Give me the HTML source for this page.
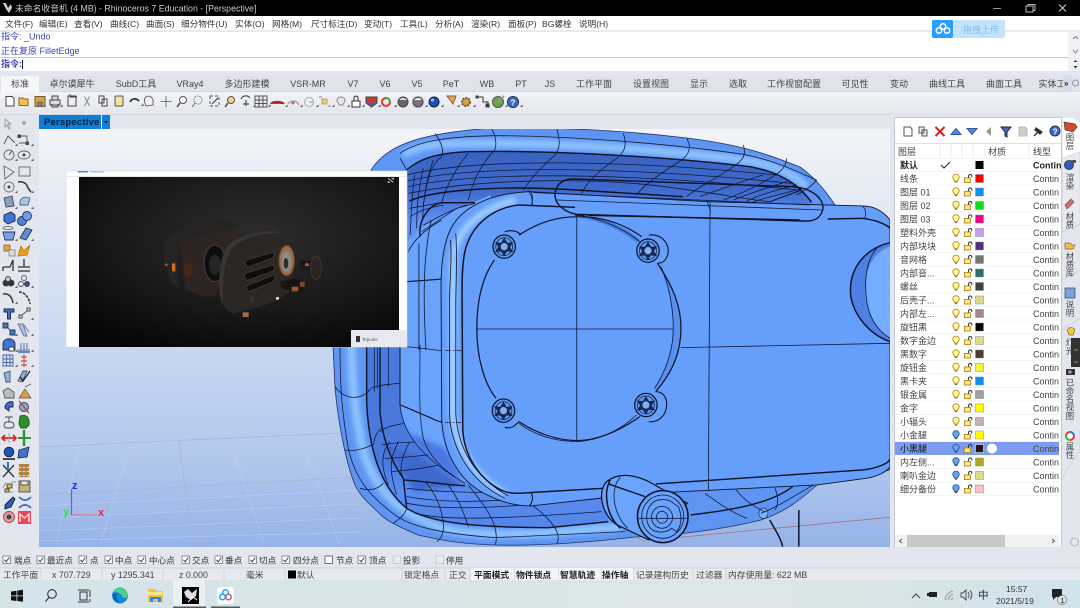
<!DOCTYPE html>
<html><head><meta charset="utf-8"><title>Rhinoceros 7</title>
<style>
html,body{margin:0;padding:0;width:1080px;height:608px;overflow:hidden;background:#e3e6ee}
svg{display:block;filter:blur(.3px)}
text{font-family:"Liberation Sans","Noto Sans CJK SC",sans-serif;font-size:9px;fill:#333}
.m text{font-size:8.6px;fill:#333}
.t text{font-size:9px;fill:#444;text-anchor:middle}
.l text{font-size:9px;fill:#444}
.c text{font-size:9px;fill:#444}
.k text{font-size:8.6px;fill:#333}
.s text{font-size:8.8px;fill:#444}
.s .b{font-weight:bold;fill:#222}
.th{fill:none;stroke:#101c3c;stroke-width:2.4}
.tk{fill:none;stroke:#0c1224;stroke-width:4.2}
</style></head><body>
<svg width="1080" height="608" viewBox="0 0 1080 608" xmlns="http://www.w3.org/2000/svg">
<defs>
<filter id="bl" x="-20%" y="-20%" width="140%" height="140%"><feGaussianBlur stdDeviation="7"/></filter>
<linearGradient id="vp" x1="0" y1="0" x2="0" y2="1"><stop offset="0" stop-color="#f3f4f7"/><stop offset=".12" stop-color="#e8edf5"/><stop offset=".55" stop-color="#c6d6f1"/><stop offset=".8" stop-color="#b0c6ec"/><stop offset="1" stop-color="#95b3e8"/></linearGradient>
<linearGradient id="tb" x1="0" y1="0" x2="0" y2="1"><stop offset="0" stop-color="#f2f3f7"/><stop offset="1" stop-color="#e2e5ec"/></linearGradient>
<linearGradient id="dk" gradientUnits="userSpaceOnUse" x1="0" y1="150" x2="0" y2="222"><stop offset="0" stop-color="#3a62c0"/><stop offset=".55" stop-color="#3f69cb"/><stop offset="1" stop-color="#5f92f4"/></linearGradient>
<linearGradient id="dk2" gradientUnits="userSpaceOnUse" x1="0" y1="345" x2="0" y2="530"><stop offset="0" stop-color="#4a79de"/><stop offset=".5" stop-color="#5a8df0"/><stop offset="1" stop-color="#5586ea"/></linearGradient>
<linearGradient id="tk" x1="0" y1="0" x2="1" y2="0"><stop offset="0" stop-color="#d4e4ea"/><stop offset=".7" stop-color="#dde6e6"/><stop offset="1" stop-color="#d0e2ea"/></linearGradient>
<radialGradient id="pic" cx=".55" cy=".35" r=".75"><stop offset="0" stop-color="#2d2d2d"/><stop offset=".6" stop-color="#181818"/><stop offset="1" stop-color="#060606"/></radialGradient>
<clipPath id="vc"><rect x="39" y="129" width="851" height="418"/></clipPath>
<clipPath id="rc"><rect x="895" y="155" width="166" height="345"/></clipPath>
<clipPath id="tc"><rect x="0" y="76" width="1063" height="17"/></clipPath>
<g id="bulb"><path d="M0,-4.2C-2.4,-4.2 -3.2,-2.4 -3.2,-1.2C-3.2,.4 -1.6,1 -1.4,2.6H1.4C1.6,1 3.2,.4 3.2,-1.2C3.2,-2.4 2.4,-4.2 0,-4.2Z" fill="#fff3a8" stroke="#c4961f" stroke-width="1"/><path d="M-1.2,3.6H1.2" stroke="#7a6a3a" stroke-width="1"/></g>
<g id="bulbb"><path d="M0,-4.2C-2.4,-4.2 -3.2,-2.4 -3.2,-1.2C-3.2,.4 -1.6,1 -1.4,2.6H1.4C1.6,1 3.2,.4 3.2,-1.2C3.2,-2.4 2.4,-4.2 0,-4.2Z" fill="#6f9fe6" stroke="#2f62b5" stroke-width="1"/><path d="M-1.2,3.6H1.2" stroke="#345" stroke-width="1"/></g>
<g id="lock"><rect x="-3.6" y="-.6" width="6" height="4.6" fill="#ffe78a" stroke="#b08a20" stroke-width=".9"/><path d="M.6,-.8V-2.6C.6,-4.4 3.8,-4.4 3.8,-2.6V-1.4" fill="none" stroke="#333" stroke-width="1"/></g>
<g id="ck"><rect x="0" y="0" width="7.5" height="7.5" fill="#fff" stroke="#777" stroke-width=".8"/><path d="M1.4,3.8L3.2,5.8L6.2,1.6" fill="none" stroke="#444" stroke-width="1"/></g>
<g id="cr"><path d="M0,0L2.5,0L2.5,-2.5Z" fill="#555"/></g>
<g id="screw"><ellipse rx="32" ry="35" fill="#5f97f5" stroke="#0c1224" stroke-width="3.500"/><ellipse rx="24" ry="27" fill="none" stroke="#0c1224" stroke-width="1.800"/><path d="M0,-25L8,-10L24,-12L15,2L24,15L7,13L0,27L-8,13L-24,15L-15,2L-24,-12L-8,-10Z" fill="#1c2b55" stroke="#0c1224" stroke-width="1.800"/><ellipse rx="10" ry="11" fill="#7fb1f5"/></g>
</defs>

<!-- title -->
<rect width="1080" height="16" fill="#000"/>
<path d="M3,3L6,3L8,8L11,4L12,8L9,13L6,9Z" fill="#ccc"/>
<text x="15" y="11.500" style="font-size:8.800px;fill:#c8c8c8">未命名收音机 (4 MB) - Rhinoceros 7 Education - [Perspective]</text>
<path d="M993,8.500H1001" stroke="#999" stroke-width="1"/>
<rect x="1026" y="6" width="7" height="6" fill="none" stroke="#bbb" stroke-width="1"/><path d="M1028,6V4.500H1035V10.500H1033" fill="none" stroke="#bbb"/>
<path d="M1059,4.500L1066,11.500M1066,4.500L1059,11.500" stroke="#ccc" stroke-width="1"/>

<!-- menu -->
<rect y="16" width="1080" height="15" fill="#fff"/>
<rect y="30" width="1080" height="2" fill="#e8eaf0"/>
<g class="m">
<text x="5" y="27">文件(F)</text><text x="39" y="27">编辑(E)</text><text x="74" y="27">查看(V)</text><text x="110" y="27">曲线(C)</text><text x="146" y="27">曲面(S)</text><text x="181" y="27">细分物件(U)</text><text x="235" y="27">实体(O)</text><text x="272" y="27">网格(M)</text><text x="311" y="27">尺寸标注(D)</text><text x="364" y="27">变动(T)</text><text x="400" y="27">工具(L)</text><text x="435" y="27">分析(A)</text><text x="471" y="27">渲染(R)</text><text x="508" y="27">面板(P)</text><text x="542" y="27">BG螺栓</text><text x="579" y="27">说明(H)</text>
</g>

<!-- command -->
<rect y="32" width="1080" height="25" fill="#fff"/>
<text x="1" y="39.500" style="fill:#3c46ae;font-size:9px">指令: _Undo</text>
<text x="1" y="54" style="fill:#3c46ae;font-size:9px">正在复原 FilletEdge</text>
<rect y="57" width="1080" height="1" fill="#c6c8d2"/>
<rect y="58" width="1080" height="13" fill="#fff"/>
<text x="1" y="67" style="fill:#3c46ae;font-size:9px;font-weight:bold">指令:</text>
<rect x="22" y="60" width="1" height="9" fill="#222"/>
<rect y="71" width="1080" height="5" fill="#e3e6ee"/>
<rect x="1068" y="32" width="12" height="39" fill="#f0f1f4"/>
<path d="M1073,39L1075.500,36.500L1078,39M1073,50L1075.500,53L1078,50" fill="none" stroke="#777" stroke-width=".9"/>
<path d="M1073.500,62L1075.500,60L1077.500,62ZM1073.500,66L1075.500,68.500L1077.500,66Z" fill="#333"/>

<!-- baidu float -->
<rect x="932" y="20" width="73" height="18" rx="2" fill="#c3e3fd"/>
<rect x="932" y="20" width="21" height="18" rx="2" fill="#2a9dfd"/>
<circle cx="939" cy="30.500" r="2.700" fill="none" stroke="#fff" stroke-width="1.500"/><circle cx="947" cy="30.500" r="2.700" fill="none" stroke="#fff" stroke-width="1.500"/><circle cx="943" cy="26.500" r="2.700" fill="none" stroke="#fff" stroke-width="1.500"/>
<text x="963" y="33" style="fill:#78bff7;font-size:9px">拖拽上传</text>

<!-- tabs -->
<rect y="76" width="1080" height="16" fill="#e0e3ec"/>
<rect y="91.500" width="1063" height="1" fill="#c8cbd5"/>
<rect x="1" y="76" width="38" height="17" rx="2" fill="#f6f7f9"/>
<g class="t" clip-path="url(#tc)">
<text x="20" y="87">标准</text><text x="72" y="87">卓尔谟犀牛</text><text x="136" y="87">SubD工具</text><text x="190" y="87">VRay4</text><text x="247" y="87">多边形建模</text><text x="308" y="87">VSR-MR</text><text x="353" y="87">V7</text><text x="385" y="87">V6</text><text x="417" y="87">V5</text><text x="451" y="87">PeT</text><text x="487" y="87">WB</text><text x="521" y="87">PT</text><text x="550" y="87">JS</text><text x="594" y="87">工作平面</text><text x="651" y="87">设置视图</text><text x="699" y="87">显示</text><text x="738" y="87">选取</text><text x="794" y="87">工作视窗配置</text><text x="855" y="87">可见性</text><text x="899" y="87">变动</text><text x="947" y="87">曲线工具</text><text x="1004" y="87">曲面工具</text><text x="1052" y="87">实体工</text>
</g>
<rect x="1063" y="75" width="9" height="17" fill="#d4dbea"/>
<text x="1064" y="86" style="font-size:8px;fill:#222;font-weight:bold">»</text>
<circle cx="1075.500" cy="83" r="3" fill="none" stroke="#999"/>

<!-- main toolbar -->
<rect y="92" width="1080" height="23" fill="url(#tb)"/>
<rect x="0" y="114" width="890" height="1" fill="#d4d7e0"/>
<g stroke-width="1" stroke="#444" fill="none">
<path d="M6,96.500H12L14,98.500V106H6Z" fill="#fff"/>
<path d="M19,104.500V98H23L24,99H28V105.500H19Z" fill="#f1c24b" stroke="#8a6a20"/>
<rect x="35" y="96.500" width="10" height="10" fill="#d7a73a" stroke="#6a5b33"/><rect x="37" y="101.500" width="6" height="5" fill="#777" stroke="none"/>
<path d="M50,100H60V105H50ZM52,100V96H58V100M52,104V107H58V104" fill="#ddd"/>
<path d="M68,96H76V106H68Z" fill="#eee"/><path d="M70,94V97H77"/>
<path d="M84.500,96.500L89.500,106M89.500,96.500L84.500,106" stroke="#888"/>
<path d="M99,96H104V103H99ZM102,99H107V106H102Z" fill="#f4f4f4"/>
<rect x="115" y="96" width="8" height="10" rx="1" fill="#f3e39d" stroke="#555"/>
<path d="M130,102C132,98 136,98 139,101" stroke="#222" stroke-width="1.600"/>
<path d="M146,106C144,102 144,98 146,97C149,95 152,97 153,100V105Z" fill="#f3f3f3" stroke="#666"/>
<path d="M166,96V107M160.500,101.500H171.500" stroke="#777"/>
<circle cx="183" cy="100" r="3.500" fill="#fff" stroke="#555"/><path d="M180,103L177,107" stroke="#555" stroke-width="1.500"/>
<circle cx="198" cy="100" r="4" stroke="#777" stroke-dasharray="1.500 1"/><path d="M195,103L192,107" stroke="#666"/>
<path d="M210,96H219V106H210Z" stroke="#556" stroke-dasharray="3 2"/><path d="M212,104L218,98" stroke="#333"/>
<circle cx="231" cy="100" r="3.500" fill="#f0d878" stroke="#555"/><path d="M228,103L225,107" stroke="#555" stroke-width="1.500"/>
<path d="M241,99C243,95 248,95 250,98M246,100V106M243,104H249" stroke="#333"/>
<path d="M255,96H267V107H255ZM255,100H267M255,103.500H267M259,96V107M263,96V107" stroke="#555"/>
<path d="M271,104C272,101 282,101 284,104" fill="#c33" stroke="#a22" stroke-width="1.800"/>
<path d="M288,104C291,100 297,100 299,105" stroke="#aaa" stroke-width="1.500"/><circle cx="293" cy="103" r="1.500" fill="#c66" stroke="none"/>
<circle cx="309" cy="102" r="4.500" stroke="#aaa"/><path d="M309,102H313" stroke="#999"/>
<rect x="322" y="99" width="5" height="5" fill="#f4c94d" stroke="#aa8"/><path d="M319,97H322M328,106H331" stroke="#888"/>
<path d="M341,97C338,97 337,99 337,100.500C337,102.500 339,103 339,105H343C343,103 345,102.500 345,100.500C345,99 344,97 341,97Z" fill="#e6e6e6" stroke="#888"/>
<rect x="352" y="101" width="8" height="6" fill="#fff" stroke="#333"/><path d="M354,101V98C354,95.500 358,95.500 358,98V101" stroke="#333"/>
<path d="M366,97H377V103L371.500,107L366,103Z" fill="#c83a2e" stroke="#444"/><path d="M366,102L371.500,104.500L377,102" stroke="#3a5fd0" stroke-width="1.500"/>
<circle cx="386" cy="102" r="4" stroke="#d44" stroke-width="2.200"/><path d="M386,98A4,4 0 0 1 390,102" stroke="#3c3" stroke-width="2.200"/>
<circle cx="403" cy="102" r="5" fill="#666" stroke="#444"/><path d="M399,100A5,5 0 0 1 407,100Z" fill="#ddd" stroke="none"/>
<rect x="412" y="96" width="13" height="12" fill="#dfe3ee" stroke="none"/><circle cx="418" cy="102" r="5" fill="#777" stroke="#444"/><path d="M414,100A5,5 0 0 1 422,100Z" fill="#eee" stroke="none"/>
<circle cx="434" cy="102" r="5" fill="#1f4fb8" stroke="#123"/><circle cx="432.500" cy="100" r="1.500" fill="#a8c8f8" stroke="none"/>
<path d="M447,96H456L453,104Z" fill="#e8a93a" stroke="#855"/>
<circle cx="466" cy="102" r="4" fill="#d2a14a" stroke="#7a5a2a" stroke-width="2" stroke-dasharray="2 1"/>
<path d="M477,97H483V102H488V106" stroke="#333"/><rect x="476" y="96" width="2" height="2" fill="#333"/><rect x="486" y="104" width="3" height="3" fill="#333"/>
<circle cx="498" cy="102" r="5.500" fill="#6aa04a" stroke="#555"/><path d="M498,102L504,96" stroke="#999" stroke-width="2"/>
<circle cx="513" cy="102" r="5.500" fill="#3f6ad0" stroke="#234"/><text x="510.500" y="105.500" style="font-size:8px;fill:#fff;font-weight:bold" stroke="none">?</text>
</g>
<use href="#cr" x="43" y="107"/><use href="#cr" x="60" y="107"/><use href="#cr" x="141" y="106"/><use href="#cr" x="253" y="107"/><use href="#cr" x="268" y="107"/><use href="#cr" x="285" y="107"/><use href="#cr" x="300" y="107"/><use href="#cr" x="316" y="107"/><use href="#cr" x="332" y="107"/><use href="#cr" x="347" y="107"/><use href="#cr" x="362" y="107"/><use href="#cr" x="378" y="107"/><use href="#cr" x="394" y="107"/><use href="#cr" x="425" y="107"/><use href="#cr" x="441" y="107"/><use href="#cr" x="457" y="107"/><use href="#cr" x="473" y="107"/><use href="#cr" x="505" y="107"/><use href="#cr" x="520" y="107"/>

<!-- viewport tab + viewport -->
<rect x="39" y="115" width="851" height="14" fill="#e3e6ee"/>
<rect x="39" y="115" width="62" height="14" fill="#0d7fd6"/>
<rect x="102" y="115" width="8" height="14" fill="#0d7fd6"/>
<path d="M104,121H108L106,123.500Z" fill="#111"/>
<text x="44" y="125" style="font-size:9.500px;font-weight:bold;fill:#0b1c33;letter-spacing:.2px">Perspective</text>
<rect x="39" y="129" width="851" height="418" fill="url(#vp)"/>
<g stroke="#a5b5cc" stroke-width=".7" fill="none">
<path d="M39,447L340,433M39,495L359,477M179,441L193,546"/>
</g>
<g stroke="#c5d5f0" stroke-width=".5" fill="none" opacity=".8">
<path d="M39,506L360,490M39,518L360,504M39,531L360,518M39,541L360,532M80,448L55,546M130,445L100,546M230,440L265,546M300,436L340,546"/>
</g>

<!-- model -->
<g clip-path="url(#vc)">
<!-- silhouette -->
<path d="M370,172C385,145 420,133 493,128C557,127 620,130 687,138C743,145 770,155 800,167C815,178 825,190 835,205L890,220V470L817,485C800,500 785,512 761,520C720,530 680,535 635,537C580,543 540,546 495,545C460,544 440,540 418,535C395,525 385,520 378,512C365,500 360,495 355,485C345,460 338,420 335,388L333,345Z" fill="#5e95f2" stroke="#22345e" stroke-width=".8"/>
<g transform="translate(400,125) scale(.3333)">
<path d="M10,90C60,55 130,55 280,55C500,55 800,75 1030,105C1120,120 1170,140 1220,185" fill="none" stroke="#8cc2ff" stroke-width="24" filter="url(#bl)"/>
</g>
<g transform="translate(335,345) scale(.3333)">
<path d="M50,0C50,120 65,260 95,350C140,460 220,520 340,555C480,580 650,565 860,545" fill="none" stroke="#8cc2ff" stroke-width="26" filter="url(#bl)"/>
</g>
<!-- cavity fills -->
<path d="M407,172C420,158 437,153 467,152C550,150 667,157 750,167C777,172 797,182 812,204L700,225L560,225L440,240L407,270Z" fill="url(#dk)"/>
<g transform="translate(335,345) scale(.3333)">
<path d="M95,0V170C100,300 130,420 215,490C280,530 400,548 640,548L820,530L800,430L570,443C460,440 390,400 390,415C280,350 205,280 195,180V0Z" fill="url(#dk2)"/>
<path d="M108,0V140" stroke="#2f55b8" stroke-width="30" fill="none" filter="url(#bl)"/>
<path d="M140,290C180,340 210,400 240,440L380,420L260,340Z" fill="#3d69cf" filter="url(#bl)"/>
</g>

<!-- top mesh -->
<g transform="translate(400,125) scale(.3333)">
<g class="th">
<path d="M0,85C50,50 130,35 280,32C500,32 800,55 1030,88C1120,105 1180,135 1250,165"/>
<path d="M105,25C130,60 130,80 125,95C90,120 80,170 70,240"/>
<path d="M0,100C10,115 15,125 20,135"/>
<path d="M275,10C292,45 290,70 280,80"/><path d="M280,80C240,120 215,180 205,225"/>
<path d="M205,85C170,125 135,190 125,235"/>
<path d="M470,10C482,50 480,70 465,90C420,130 385,170 370,195"/>
<path d="M670,25C682,60 675,80 650,100C600,135 560,170 545,205"/>
<path d="M860,40C875,65 870,85 845,105C790,140 730,180 710,210"/>
<path d="M1030,60C1040,90 1030,105 1000,125C950,160 880,195 860,215"/>
<path d="M1160,100C1160,130 1130,150 1100,165C1060,190 1000,215 970,225"/>
<path d="M1250,165C1235,185 1215,195 1190,210"/>
<path d="M20,150C200,105 600,98 1130,150"/>
<path d="M22,168C200,125 600,118 1175,175"/>
<path d="M24,185C230,140 650,140 1195,195"/>
<path d="M26,205C250,160 600,155 830,190C950,205 1050,225 1110,230"/>
<path d="M28,250L130,232M30,275C60,255 100,245 130,240"/>
<path d="M45,150C35,200 35,260 30,330M70,130C55,190 50,250 50,310M100,105C80,160 70,220 68,280"/>
<path d="M1000,225C1060,200 1130,180 1160,170M1040,228C1090,205 1150,190 1190,180M900,215C970,190 1050,160 1090,150M1060,230C1110,215 1170,200 1210,190"/>
</g>
<path class="tk" d="M20,135C60,100 110,85 200,80C450,75 800,95 1050,125C1130,140 1190,170 1235,232"/>
<path class="tk" d="M28,228C100,195 300,180 530,195L850,215"/>
<path class="tk" style="stroke-width:3" d="M1110,230L1205,195"/>
</g>

<!-- body upper + lower -->
<g transform="translate(340,120) scale(.3508,.3333)">
<path d="M190,370C240,300 330,270 430,225L430,700H170Z" fill="#6aa3fc"/>
</g>
<g transform="translate(335,345) scale(.3333)">
<path d="M195,0V180C205,280 280,350 390,415L400,0Z" fill="#6aa3fc"/>
<path d="M215,260C250,320 310,370 385,410L330,310Z" fill="#4a78e0" filter="url(#bl)"/>
<g class="th">
<path d="M15,0C15,120 20,200 40,310C60,400 100,450 180,510C220,540 300,565 480,578L870,560"/>
<path d="M0,125C30,165 70,165 100,140C105,125 130,120 195,115"/>
<path d="M30,315C50,320 80,315 110,300M75,430C110,440 130,430 145,415M215,490C210,510 195,520 175,535M325,535C328,560 320,580 305,590M480,548C485,570 485,590 480,600M660,548C672,570 672,585 665,595"/>
<path d="M118,0V140M127,0V130M160,0V125"/>
<path d="M135,260C160,240 190,240 205,235M115,300C120,270 130,255 140,250"/>
<path d="M140,300C180,290 220,295 240,290M150,340C180,340 230,335 280,330M170,380C220,375 270,370 310,360"/>
<path d="M165,290C140,320 135,360 160,420M190,290C165,340 160,370 185,450M225,290C200,330 190,380 205,400"/>
<path d="M215,430C300,440 420,445 540,440M215,455C300,470 420,475 560,460M215,475C300,490 400,500 800,460M240,505C300,520 400,530 800,500"/>
<path d="M270,410C300,440 320,490 325,535M340,420C370,460 390,510 400,545M400,420C440,470 470,510 480,548M590,480C620,500 640,520 660,548"/>
<path d="M255,0C255,120 250,210 265,280C280,330 320,370 360,395"/>
<path d="M195,180C205,280 280,350 390,415"/>
</g>
<path class="tk" d="M95,0V170C100,300 130,420 215,490C280,530 400,548 640,548L820,530"/>
<path class="tk" d="M135,0V200C140,260 160,340 205,400L215,490"/>
<path class="tk" d="M205,405C280,410 330,420 390,422"/>
<path class="tk" style="stroke-width:3" d="M195,0V180"/>
<path class="tk" style="stroke-width:3.400" d="M197,180L290,220C320,235 340,235 355,235"/>
</g>
<!-- body upper lines -->
<g transform="translate(400,125) scale(.3333)">
<path class="tk" d="M60,335C55,280 90,235 130,233L225,233"/>
<path class="th" d="M65,320L170,250L225,235M70,300C110,280 150,255 200,240"/>
</g>
<g transform="translate(340,120) scale(.3508,.3333)">
<g class="th">
<path d="M225,370V690M260,300C240,400 235,500 245,690"/>
<path d="M195,395C210,360 240,330 290,300"/>
<path d="M190,680L290,692"/>
</g>
<path class="tk" style="stroke-width:3.500" d="M190,485L320,475H345"/>

<!-- front block -->
<path d="M540,215C430,220 340,260 310,340C295,380 288,440 288,500L290,900C295,1000 340,1090 430,1130C470,1150 510,1158 545,1158L780,1130L880,1120L1360,1095L1500,1075C1530,1070 1560,1055 1568,1040V300C1545,270 1520,258 1490,258L1050,245L700,225Z" fill="#669ffb" stroke="#0c1224" stroke-width="2.600"/>
<path d="M322,420V880C330,980 380,1070 470,1120" fill="none" stroke="#a4d0ff" stroke-width="20" filter="url(#bl)"/>
<path d="M322,420C325,350 380,270 500,240" fill="none" stroke="#a4d0ff" stroke-width="18" filter="url(#bl)"/>
<path class="tk" d="M510,255C430,265 370,320 355,400C348,440 348,480 348,520L350,930C355,1020 410,1090 470,1115C490,1122 510,1120 540,1118L750,1105"/>
<path class="tk" d="M900,1092L1490,1050C1530,1045 1568,1030 1568,1015"/>
<path class="tk" d="M510,255L670,262M1390,297L1490,295C1530,300 1560,315 1568,325"/>
<path class="tk" d="M670,285L1310,300"/>
<g class="th">
<path d="M315,360C320,420 312,480 312,560V880C315,970 360,1080 470,1135"/>
<path d="M330,340C335,420 330,490 330,560V880C335,980 380,1070 480,1128"/>
<path d="M1490,258C1500,270 1500,285 1495,297M545,215C550,230 550,245 545,258"/>
<path d="M1055,245L1050,1110"/>
<path d="M972,683L1568,670"/>
<path d="M675,290V960"/>
<path d="M390,627H970"/>
<path d="M300,692H345M300,908H345" stroke-dasharray="16 6 5 5"/>
</g>
<path class="tk" style="stroke-width:3.200" d="M545,1118C550,1130 550,1145 540,1158"/>
<!-- circle plate -->
<path d="M700,285C770,300 820,325 855,360L845,368C800,330 750,305 680,292Z" fill="#4a7be0"/>
<path d="M915,440C950,510 972,570 972,625C972,700 945,760 900,815L897,805C930,750 950,690 950,625C950,570 940,500 905,430Z" fill="#5a8ff0"/>
<g class="th">
<path d="M915,440C940,500 950,570 950,625C950,690 930,750 897,805"/>
<path d="M680,285C750,300 800,320 855,365"/>
<path d="M510,910C560,950 620,965 680,965C740,960 800,930 845,885"/>
</g>
<path class="tk" style="stroke-width:3.500" d="M510,345C570,305 620,290 680,290C740,290 800,305 860,350M905,430C950,500 972,560 972,625C972,700 945,760 900,815M855,890C800,930 740,960 680,962C620,962 560,940 510,905M440,420C400,480 390,560 390,625C390,710 410,790 445,835"/>
<path class="tk" style="stroke-width:3.200" d="M880,345C920,340 940,375 935,400C930,425 915,430 905,430M900,815C925,815 935,840 930,865C925,895 900,908 880,905M470,335C490,328 510,335 515,345M470,922C490,928 500,915 510,905"/>
<use href="#screw" x="468" y="380"/><use href="#screw" x="878" y="392"/><use href="#screw" x="466" y="872"/><use href="#screw" x="872" y="855"/>
<!-- speaker right -->
<path d="M1568,368C1500,385 1455,440 1455,510C1455,570 1500,640 1568,665Z" fill="#4f80e6"/>
<path d="M1568,380C1525,395 1497,440 1497,510C1497,570 1525,630 1568,655Z" fill="#74acff"/>
<path class="tk" d="M1568,368C1500,385 1455,440 1455,510C1455,570 1500,640 1568,665"/>
<path class="th" d="M1530,385C1500,420 1495,480 1500,530C1505,590 1530,630 1568,655"/>
<!-- axis + knob -->
<path d="M940,1255L1568,1192" stroke="#a36a78" stroke-width="2.200" fill="none"/>
<path d="M840,1250L870,1265" stroke="#5a9a6a" stroke-width="2" fill="none"/>
<path d="M1225,1200C1240,1230 1255,1250 1262,1280M1308,1170V1280" class="tk"/>
<ellipse cx="1207" cy="1180" rx="13" ry="16" fill="#7db0fb" stroke="#1b2c55" stroke-width="2"/>
<path class="tk" d="M1000,1185C1120,1170 1230,1150 1290,1100"/>
<path class="th" d="M1350,1095C1290,1130 1240,1165 1200,1180M1040,1120C1080,1150 1120,1180 1160,1195M1130,1110C1150,1140 1180,1160 1210,1175M1240,1105C1250,1130 1250,1155 1240,1170"/>
<path d="M760,1085C790,1060 830,1060 880,1085L990,1150L880,1260L790,1215C750,1190 730,1120 760,1085Z" fill="#6ba4fc" stroke="#0c1224" stroke-width="3.500"/>
<path class="tk" d="M765,1092L870,1130M770,1080C750,1120 760,1190 800,1225"/>
<path class="th" d="M800,1072C770,1100 775,1180 820,1225"/>
<ellipse cx="920" cy="1190" rx="72" ry="78" fill="#6aa2fb" stroke="#0c1224" stroke-width="4.500"/>
<ellipse cx="920" cy="1190" rx="60" ry="65" class="th"/>
<path class="th" d="M890,1150C900,1135 940,1135 950,1150L965,1160C975,1190 975,1215 960,1235L945,1225C930,1240 900,1240 885,1225C870,1205 870,1170 890,1150Z"/>
<ellipse cx="918" cy="1192" rx="30" ry="33" class="th"/>
<ellipse cx="918" cy="1192" rx="16" ry="18" class="th"/>
<path class="th" d="M850,1195H990"/>
</g>
<!-- slot -->
<g transform="translate(400,125) scale(.3333)">
<path class="th" d="M385,197C395,210 398,225 397,240M400,203L1230,240M470,225L1265,255M920,225L932,260"/>
<path class="tk" d="M520,162L1180,185C1240,190 1275,225 1268,255C1262,280 1240,290 1210,288L530,268C490,260 462,235 465,205C470,175 490,162 520,162Z"/>
</g>
</g>

<!-- picture window -->
<rect x="66" y="171" width="341" height="176" fill="#fff" stroke="#d5d8df" stroke-width=".6"/>
<rect x="78" y="171" width="10" height="1.500" fill="#4a90e0"/><rect x="90" y="171" width="14" height="1.500" fill="#a9c7ee"/>
<rect x="79" y="177" width="320" height="170" fill="url(#pic)"/>
<rect x="66" y="176" width="341" height=".8" fill="#dfe0e4"/>
<g transform="translate(60,165) scale(.3333)">
<path d="M985,40L1000,52M995,40H1000V45M985,48V52H990" stroke="#ccc" stroke-width="3" fill="none"/>
<path d="M310,240C320,190 420,165 500,165C530,170 535,190 520,195L370,218L350,240L355,370L385,382C340,375 310,330 310,240Z" fill="#262423"/>
<path d="M360,225L560,203L500,240L470,390L440,396L375,375Z" fill="#2e2522"/>
<ellipse cx="385" cy="315" rx="14" ry="22" fill="#4a2416"/>
<ellipse cx="465" cy="295" rx="33" ry="55" fill="#0f0e0e" stroke="#3e3a37" stroke-width="4"/>
<ellipse cx="465" cy="300" rx="18" ry="30" fill="#252525"/>
<path d="M510,235C560,200 640,190 670,205C695,220 700,250 700,300L700,360C690,400 600,430 520,445C490,440 475,400 478,340C480,290 490,255 510,235Z" fill="#2b2725"/>
<path d="M510,235C560,200 640,190 670,205C640,200 560,210 520,245C495,275 485,340 490,420C478,400 475,370 478,340C480,290 490,255 510,235Z" fill="#3a3532"/>
<path d="M560,285L640,262Q646,270 640,278L562,307Q552,296 560,285ZM556,325L640,300Q646,310 640,318L560,347Q550,335 556,325ZM562,362L642,330Q648,340 640,350L566,380Q556,372 562,362Z" fill="#0f0e0d" stroke="#48433f" stroke-width="2"/>
<ellipse cx="680" cy="287" rx="23" ry="45" fill="#a06a48" stroke="#7a4a28" stroke-width="3"/>
<ellipse cx="680" cy="290" rx="15" ry="32" fill="#8a8a8a"/><ellipse cx="678" cy="295" rx="7" ry="16" fill="#2c2c2c"/>
<path d="M720,285L760,290L750,318L720,310Z" fill="#1a1716"/>
<ellipse cx="768" cy="308" rx="16" ry="35" fill="#2a2522" stroke="#5a3e30" stroke-width="2"/>
<rect x="735" y="295" width="12" height="8" fill="#b05a28"/>
<path d="M660,350L700,340L735,350L725,385L700,380L665,370Z" fill="#171412"/>
<rect x="695" y="365" width="20" height="14" fill="#9c5530"/><rect x="720" y="350" width="14" height="16" fill="#7c4326"/>
<rect x="548" y="442" width="18" height="14" fill="#a86c42"/><rect x="648" y="396" width="9" height="8" fill="#ddd"/>
<rect x="336" y="295" width="10" height="24" fill="#d56a1f"/><rect x="316" y="296" width="6" height="6" fill="#d56a1f"/>
<rect x="572" y="395" width="10" height="14" fill="#4a3020"/>
</g>
<rect x="351" y="330" width="56" height="17" fill="#e7e9ee"/>
<rect x="356" y="336" width="4" height="6" fill="#333"/>
<text x="362" y="341" style="font-size:4.500px;fill:#555">Tepuole</text>

<!-- left toolbar bg -->
<rect x="0" y="115" width="39" height="432" fill="#e3e6ee"/>
<g stroke="#444" stroke-width=".9" fill="none">
<path d="M5,119V127L7,125L9,129L10,128L8,124L11,124Z" fill="#eee" stroke="#999"/>
<circle cx="24" cy="123" r="1.500" fill="#aaa" stroke="#aaa"/>
<path d="M4,144L8,136L15,143" stroke="#555"/>
<path d="M19,136H27M19,143H27M27,136V143" stroke="#555"/><rect x="18" y="135" width="2.500" height="2.500" fill="#444"/><rect x="26" y="142" width="2.500" height="2.500" fill="#444"/>
<circle cx="9" cy="155" r="5" stroke="#666"/><path d="M9,155L12,151" stroke="#444"/>
<ellipse cx="24" cy="155" rx="6" ry="4" stroke="#666"/><circle cx="24" cy="155" r="1" fill="#444"/>
<path d="M4,166L14,172L5,179Z" stroke="#666"/>
<rect x="19" y="167" width="11" height="9" stroke="#666"/>
<circle cx="9" cy="187" r="5" stroke="#777"/><circle cx="9" cy="187" r="1" fill="#444"/>
<path d="M18,182C24,181 27,184 28,188L31,192" stroke="#333" stroke-width="1.500"/>
<path d="M4,198L12,196L14,206L6,207Z" fill="#8aa0c0" stroke="#445"/>
<path d="M20,205C19,198 24,196 30,198L28,205Z" fill="#a9c3ea" stroke="#567"/>
<path d="M4,215L11,212L15,215V221L8,224L4,221Z" fill="#3f74d6" stroke="#224"/>
<circle cx="22" cy="221" r="4.500" fill="#5184dc" stroke="#234"/><circle cx="27" cy="216" r="4.500" fill="#6f9fe8" stroke="#234"/>
<ellipse cx="8" cy="228" rx="5" ry="1.500" stroke="#777"/><path d="M3,232H15L13,240H5Z" fill="#74a2e6" stroke="#335"/>
<path d="M20,238L26,228L32,230L26,240Z" fill="#5e8bd4" stroke="#234"/>
<rect x="4" y="245" width="6" height="6" fill="#e8a629" stroke="#865"/><rect x="9" y="250" width="6" height="6" fill="#ddd" stroke="#888"/>
<path d="M18,256L21,246L24,251L30,245L27,255Z" fill="#f0a020" stroke="#c17a10"/>
<path d="M3,267H10L13,260V271M3,267V271" stroke="#333" stroke-width="1.300"/>
<path d="M18,267H30M24,259V267M18,271H30" stroke="#333" stroke-width="1.300"/>
<circle cx="6" cy="283" r="3" fill="#333"/><circle cx="11" cy="283" r="3" fill="#333"/><circle cx="8" cy="279" r="2.500" fill="#bcd"/>
<circle cx="24" cy="278" r="2.500" stroke="#555"/><circle cx="21" cy="284" r="2.500" stroke="#555"/><circle cx="27" cy="284" r="2.500" fill="#2a4ea0"/>
<path d="M3,294C9,293 12,297 13,303" stroke="#333" stroke-width="1.500"/>
<path d="M19,292C25,292 29,298 30,304" stroke="#333" stroke-width="1.500" stroke-dasharray="3 1"/>
<path d="M4,309H14V312H10.500V319H7.500V312H4Z" fill="#3f74c9" stroke="#224"/>
<rect x="19" y="315" width="3" height="3" stroke="#333"/><rect x="27" y="308" width="3" height="3" stroke="#333"/><path d="M22,315L27,311" stroke="#555"/>
<rect x="3" y="323" width="5" height="5" fill="#3f74c9" stroke="#234"/><rect x="10" y="330" width="5" height="5" fill="#3f74c9" stroke="#234"/><path d="M8,328L10,330"/>
<path d="M18,324H23L27,336H24ZM24,325L29,332" stroke="#678" fill="#a9c3ea"/>
<path d="M3,344C3,337 15,337 15,344V350H3Z" fill="#3f74d6" stroke="#234"/><rect x="9" y="347" width="5" height="4" fill="#fff" stroke="#333"/>
<path d="M18,350H30M21,343V349M24,343V349M27,343V349" stroke="#3a5fa8"/><path d="M18,352H30" stroke="#3a5fa8" stroke-width="1.500"/>
<path d="M3,355H13V366H3ZM3,359H13M3,362.500H13M6.500,355V366M10,355V366" stroke="#3f5fa0"/>
<path d="M24,354V367M21,357H27M21,361H27M21,365H27" stroke="#c33"/>
<path d="M4,373L10,371V382H6ZM18,381L23,371H27L22,382Z" fill="#8fb0e0" stroke="#456"/>
<path d="M20,377L23,381L30,371" stroke="#222" stroke-width="1.300"/>
<path d="M3,391L8,388L14,392V398H5Z" fill="#bbb" stroke="#555"/>
<path d="M19,398L25,389L31,398Z" fill="#dd9c3c" stroke="#865"/><path d="M25,387L31,384" stroke="#555"/>
<path d="M5,408A6,6 0 0 1 13,402V407H9V411Z" fill="#3f6fd0" stroke="#223"/>
<circle cx="24" cy="407" r="4.500" fill="#8fa8c8" stroke="#345"/><path d="M19,401L29,413" stroke="#c33" stroke-width="1.200"/>
<rect x="4" y="422" width="10" height="6" rx="3" stroke="#444"/><path d="M5,417H13M9,417V422"/>
<path d="M20,416C27,414 30,418 29,425L26,428H21L19,424Z" fill="#2e8b2e" stroke="#1a5a1a"/>
<path d="M2,438H16M5,435L2,438L5,441M13,435L16,438L13,441" stroke="#d22" stroke-width="1.800"/><path d="M9,433V443" stroke="#999"/>
<path d="M18,438H31" stroke="#2a9a2a" stroke-width="2"/><path d="M24,430V446" stroke="#2a9a2a" stroke-width="2.500"/>
<circle cx="9" cy="452" r="4.800" fill="#1f55c0" stroke="#123"/><path d="M3,459H15" stroke="#222" stroke-width="1.600"/>
<path d="M19,450L29,447L27,457L18,458Z" fill="#3f74d6" stroke="#234"/><path d="M21,455H26" stroke="#c33"/>
<path d="M3,465L14,477M14,465L3,477" stroke="#333" stroke-width="1.300"/><path d="M8,462V470" stroke="#2a6ee0" stroke-width="2"/>
<path d="M20,464V477M24,464V477M28,464V477" stroke="#c77a1a" stroke-width="2.200" stroke-dasharray="3 1"/><path d="M22,464V477M26,464V477" stroke="#222" stroke-width=".8"/>
<path d="M3,488L6,482M11,482H16M13,492H6" stroke="#999"/><rect x="7" y="484" width="5" height="4" fill="#e8b830"/><rect x="5" y="489" width="4" height="3" fill="#e8b830"/>
<rect x="19" y="481" width="11" height="11" fill="#c2b280" stroke="#554"/><rect x="21" y="481" width="7" height="4" fill="#eee"/>
<path d="M5,505L13,497L15,499L11,507L5,509Z" fill="#2f5fb8" stroke="#123"/>
<path d="M19,497C23,501 27,501 31,497M19,508C23,504 27,504 31,508" stroke="#3f6fc8" stroke-width="1.800"/>
<circle cx="9" cy="517" r="5.500" fill="#d8a0a0" stroke="#a44"/><circle cx="9" cy="517" r="2" fill="#446"/>
<rect x="18" y="511" width="13" height="13" fill="#e8436a" stroke="none"/><path d="M20,522V514L24.500,518L29,514V522" stroke="#fde7a0" stroke-width="1.500"/>
</g>
<use href="#cr" x="15" y="146"/><use href="#cr" x="31" y="146"/><use href="#cr" x="15" y="161"/><use href="#cr" x="31" y="161"/><use href="#cr" x="15" y="193"/><use href="#cr" x="31" y="193"/><use href="#cr" x="15" y="209"/><use href="#cr" x="31" y="209"/><use href="#cr" x="15" y="241"/><use href="#cr" x="31" y="241"/><use href="#cr" x="15" y="288"/><use href="#cr" x="31" y="288"/><use href="#cr" x="15" y="304"/><use href="#cr" x="31" y="320"/><use href="#cr" x="15" y="336"/><use href="#cr" x="31" y="336"/><use href="#cr" x="15" y="352"/><use href="#cr" x="31" y="352"/><use href="#cr" x="15" y="367"/><use href="#cr" x="31" y="367"/>

<!-- axis icon -->
<path d="M71.500,515V489" stroke="#5a63e0" stroke-width="1.200"/><path d="M71.500,515H97" stroke="#e07a8a" stroke-width="1.200"/>
<text x="72" y="489" style="font-size:11px;fill:#2a2ae6;font-weight:bold">z</text>
<text x="63" y="515" style="font-size:11px;fill:#2ee63a;font-weight:bold">y</text>
<text x="98" y="516" style="font-size:11px;fill:#ee2a3a;font-weight:bold">x</text>

<!-- right region -->
<rect x="890" y="115" width="190" height="432" fill="#e3e6ee"/>
<rect x="894.500" y="117.500" width="167" height="431" fill="#fff" stroke="#c3c8d6"/>
<!-- panel toolbar -->
<g stroke-width="1" fill="none" stroke="#555">
<path d="M904,127H910L912,129V136H904Z" fill="#fff"/>
<path d="M919,127H924V133H919ZM922,130H927V136H922Z" fill="#eee"/>
<path d="M935.500,127L944.500,136M944.500,127L935.500,136" stroke="#d02020" stroke-width="2"/>
<path d="M951,134.500H961L956,128.500Z" fill="#5a85d8" stroke="#2f55a8"/>
<path d="M967,128.500H977L972,134.500Z" fill="#5a85d8" stroke="#2f55a8"/>
<path d="M991,127V136L986,131.500Z" fill="#999" stroke="none"/>
<path d="M1001,127H1011L1007,132V137L1005,136V132Z" fill="#3c6ec8" stroke="#223"/>
<path d="M1019,127H1025L1027,129V136H1019Z" fill="#ccc" stroke="#bbb"/>
<path d="M1034,136L1040,130M1036,128L1042,132L1040,134L1035,130Z" fill="#333" stroke="#333" stroke-width="1.300"/>
<circle cx="1055" cy="131" r="5" fill="#3f6ad0" stroke="#234"/>
</g>
<text x="1052.700" y="134.500" style="font-size:8px;font-weight:bold;fill:#fff">?</text>
<!-- header -->
<g class="l">
<text x="898" y="155">图层</text><text x="988" y="155">材质</text><text x="1033" y="155">线型</text>
</g>
<path d="M940,144V158M951,144V158M962,144V158M973,144V158M985,144V158M1029,144V158" stroke="#eceef2"/>
<path d="M895,143.500H1061" stroke="#dde0e6"/>
<!-- rows separators -->
<g stroke="#f0f1f4" stroke-width=".8">
<path d="M895,158.500H1060M895,171.500H1060M895,185H1060M895,198.500H1060M895,212H1060M895,225.500H1060M895,239H1060M895,252.500H1060M895,266H1060M895,279.500H1060M895,293H1060M895,306.500H1060M895,320H1060M895,333.500H1060M895,347H1060M895,360.500H1060M895,374H1060M895,387.500H1060M895,401H1060M895,414.500H1060M895,428H1060M895,441.500H1060M895,455H1060M895,468.500H1060M895,482H1060M895,495.500H1060"/>
</g>
<rect x="895" y="442" width="164" height="13" fill="#7d9cee"/>
<g clip-path="url(#rc)">
<g class="l">
<text x="900" y="168.500" style="font-weight:bold;fill:#222">默认</text>
<text x="900" y="182">线条</text><text x="900" y="195.500">图层 01</text><text x="900" y="209">图层 02</text><text x="900" y="222.500">图层 03</text><text x="900" y="236">塑料外壳</text><text x="900" y="249.500">内部块块</text><text x="900" y="263">音网格</text><text x="900" y="276.500">内部音...</text><text x="900" y="290">螺丝</text><text x="900" y="303.500">后壳子...</text><text x="900" y="317">内部左...</text><text x="900" y="330.500">旋钮黑</text><text x="900" y="344">数字金边</text><text x="900" y="357.500">黑数字</text><text x="900" y="371">旋钮金</text><text x="900" y="384.500">黑卡夹</text><text x="900" y="398">银金属</text><text x="900" y="411.500">金字</text><text x="900" y="425">小辐头</text><text x="900" y="438.500">小金腿</text><text x="900" y="452" style="fill:#111">小黑腿</text><text x="900" y="465.500">内左侧...</text><text x="900" y="479">喇叭金边</text><text x="900" y="492.500">细分备份</text>
</g>
<g class="c">
<text x="1033" y="168.500" style="font-weight:bold;fill:#222">Contin</text>
<text x="1033" y="182">Contin</text><text x="1033" y="195.500">Contin</text><text x="1033" y="209">Contin</text><text x="1033" y="222.500">Contin</text><text x="1033" y="236">Contin</text><text x="1033" y="249.500">Contin</text><text x="1033" y="263">Contin</text><text x="1033" y="276.500">Contin</text><text x="1033" y="290">Contin</text><text x="1033" y="303.500">Contin</text><text x="1033" y="317">Contin</text><text x="1033" y="330.500">Contin</text><text x="1033" y="344">Contin</text><text x="1033" y="357.500">Contin</text><text x="1033" y="371">Contin</text><text x="1033" y="384.500">Contin</text><text x="1033" y="398">Contin</text><text x="1033" y="411.500">Contin</text><text x="1033" y="425">Contin</text><text x="1033" y="438.500">Contin</text><text x="1033" y="452">Contin</text><text x="1033" y="465.500">Contin</text><text x="1033" y="479">Contin</text><text x="1033" y="492.500">Contin</text>
</g>
</g>
<path d="M941,165L944,168L950,162" fill="none" stroke="#222" stroke-width="1"/>
<rect x="975.500" y="161" width="8" height="8" fill="#000"/>
<use href="#bulb" x="956" y="178.500"/><use href="#bulb" x="956" y="192"/><use href="#bulb" x="956" y="205.500"/><use href="#bulb" x="956" y="219"/><use href="#bulb" x="956" y="232.500"/><use href="#bulb" x="956" y="246"/><use href="#bulb" x="956" y="259.500"/><use href="#bulb" x="956" y="273"/><use href="#bulb" x="956" y="286.500"/><use href="#bulb" x="956" y="300"/><use href="#bulb" x="956" y="313.500"/><use href="#bulb" x="956" y="327"/><use href="#bulb" x="956" y="340.500"/><use href="#bulb" x="956" y="354"/><use href="#bulb" x="956" y="367.500"/><use href="#bulb" x="956" y="381"/><use href="#bulb" x="956" y="394.500"/><use href="#bulb" x="956" y="408"/><use href="#bulb" x="956" y="421.500"/>
<use href="#bulbb" x="956" y="435"/><use href="#bulbb" x="956" y="448.500"/><use href="#bulbb" x="956" y="462"/><use href="#bulbb" x="956" y="475.500"/><use href="#bulbb" x="956" y="489"/>
<use href="#lock" x="968" y="178.500"/><use href="#lock" x="968" y="192"/><use href="#lock" x="968" y="205.500"/><use href="#lock" x="968" y="219"/><use href="#lock" x="968" y="232.500"/><use href="#lock" x="968" y="246"/><use href="#lock" x="968" y="259.500"/><use href="#lock" x="968" y="273"/><use href="#lock" x="968" y="286.500"/><use href="#lock" x="968" y="300"/><use href="#lock" x="968" y="313.500"/><use href="#lock" x="968" y="327"/><use href="#lock" x="968" y="340.500"/><use href="#lock" x="968" y="354"/><use href="#lock" x="968" y="367.500"/><use href="#lock" x="968" y="381"/><use href="#lock" x="968" y="394.500"/><use href="#lock" x="968" y="408"/><use href="#lock" x="968" y="421.500"/><use href="#lock" x="968" y="435"/><use href="#lock" x="968" y="448.500"/><use href="#lock" x="968" y="462"/><use href="#lock" x="968" y="475.500"/><use href="#lock" x="968" y="489"/>
<g stroke="#888" stroke-width=".5">
<rect x="975.500" y="174.500" width="8" height="8" fill="#f00"/>
<rect x="975.500" y="188" width="8" height="8" fill="#0a8ff0"/>
<rect x="975.500" y="201.500" width="8" height="8" fill="#0ade14"/>
<rect x="975.500" y="215" width="8" height="8" fill="#f4008c"/>
<rect x="975.500" y="228.500" width="8" height="8" fill="#c89ff0"/>
<rect x="975.500" y="242" width="8" height="8" fill="#553080"/>
<rect x="975.500" y="255.500" width="8" height="8" fill="#767676"/>
<rect x="975.500" y="269" width="8" height="8" fill="#2c6e78"/>
<rect x="975.500" y="282.500" width="8" height="8" fill="#404040"/>
<rect x="975.500" y="296" width="8" height="8" fill="#dcd88c"/>
<rect x="975.500" y="309.500" width="8" height="8" fill="#a08888"/>
<rect x="975.500" y="323" width="8" height="8" fill="#000"/>
<rect x="975.500" y="336.500" width="8" height="8" fill="#dcd88c"/>
<rect x="975.500" y="350" width="8" height="8" fill="#4c3c3c"/>
<rect x="975.500" y="363.500" width="8" height="8" fill="#f4f43c"/>
<rect x="975.500" y="377" width="8" height="8" fill="#0a8ff0"/>
<rect x="975.500" y="390.500" width="8" height="8" fill="#a0a0a0"/>
<rect x="975.500" y="404" width="8" height="8" fill="#ffff00"/>
<rect x="975.500" y="417.500" width="8" height="8" fill="#c4b4b4"/>
<rect x="975.500" y="431" width="8" height="8" fill="#ffff00"/>
<rect x="975.500" y="444.500" width="8" height="8" fill="#2c1414" stroke="#fff"/>
<rect x="975.500" y="458" width="8" height="8" fill="#aca820"/>
<rect x="975.500" y="471.500" width="8" height="8" fill="#dcd88c"/>
<rect x="975.500" y="485" width="8" height="8" fill="#fcbcc8"/>
</g>
<circle cx="992" cy="448.500" r="5" fill="#fff"/>
<!-- h scrollbar -->
<rect x="895" y="535" width="164" height="12" fill="#f1f1f3"/>
<rect x="907" y="535" width="98" height="12" fill="#c8c8c8"/>
<path d="M902,539L899.500,541L902,543M1052,539L1054.500,541L1052,543" fill="none" stroke="#555" stroke-width="1"/>
<circle cx="1074.500" cy="542" r="4" fill="none" stroke="#b9bdc9" stroke-width="1.300"/>

<!-- right tabs -->
<path d="M1062,118H1074L1080,124V152L1062,158Z" fill="#fff"/>
<path d="M1062,158L1080,152V224L1062,232Z" fill="#e8eaf0" stroke="#cfd2da" stroke-width=".6"/>
<path d="M1064,122L1075,124L1077,127L1073,132L1065,130Z" fill="#d8482c" stroke="#444" stroke-width=".7"/>
<circle cx="1069" cy="165" r="4.500" fill="#2f5fc0" stroke="#222" stroke-width=".8"/><rect x="1071" y="160" width="5" height="3" fill="#555"/>
<path d="M1067,209L1074,202L1071,199L1065,205Z" fill="#d66" stroke="#666" stroke-width=".7"/>
<path d="M1065,249V243H1070L1072,245H1075L1073,249Z" fill="#f0bf3c" stroke="#765" stroke-width=".7"/>
<rect x="1065" y="288" width="10" height="10" fill="#7ea3dc" stroke="#345" stroke-width=".7"/>
<path d="M1067,330A4.500,4.500 0 0 1 1075,330L1073,335H1069Z" fill="#f3c830" stroke="#765" stroke-width=".7"/>
<rect x="1066" y="369" width="9" height="6" fill="#333"/><circle cx="1070" cy="372" r="1.800" fill="#999"/>
<circle cx="1070" cy="436" r="4" fill="#fff" stroke="#e33" stroke-width="2"/><path d="M1070,432A4,4 0 0 1 1074,436" fill="none" stroke="#38c" stroke-width="2"/><path d="M1066,436A4,4 0 0 0 1070,440" fill="none" stroke="#3c3" stroke-width="2"/>
<path d="M1062,234V118M1062,232L1080,224M1062,280L1080,270M1062,330L1080,318M1062,478L1080,450V430" stroke="#cfd2da" stroke-width=".8" fill="none"/>
<text x="1070" y="133" style="writing-mode:vertical-rl;font-size:8.400px;fill:#444">图层</text>
<text x="1070" y="173" style="writing-mode:vertical-rl;font-size:8.400px;fill:#444">渲染</text>
<text x="1070" y="212" style="writing-mode:vertical-rl;font-size:8.400px;fill:#444">材质</text>
<text x="1070" y="252" style="writing-mode:vertical-rl;font-size:8.400px;fill:#444">材质库</text>
<text x="1070" y="300" style="writing-mode:vertical-rl;font-size:8.400px;fill:#444">说明</text>
<text x="1070" y="338" style="writing-mode:vertical-rl;font-size:8.400px;fill:#444">灯光</text>
<text x="1070" y="378" style="writing-mode:vertical-rl;font-size:8.400px;fill:#444">已命名视图</text>
<text x="1070" y="442" style="writing-mode:vertical-rl;font-size:8.400px;fill:#444">属性</text>
<rect x="1071" y="338" width="9" height="29" fill="#333"/><path d="M1074,350H1078M1074,362H1078" stroke="#7da040" stroke-width="1"/>

<!-- osnap -->
<rect y="547" width="1080" height="21" fill="#e3e6ee"/>
<g class="k">
<use href="#ck" x="3" y="556"/><text x="14" y="563.500">端点</text>
<use href="#ck" x="37" y="556"/><text x="47" y="563.500">最近点</text>
<use href="#ck" x="79" y="556"/><text x="90" y="563.500">点</text>
<use href="#ck" x="105" y="556"/><text x="115" y="563.500">中点</text>
<use href="#ck" x="138" y="556"/><text x="149" y="563.500">中心点</text>
<use href="#ck" x="182" y="556"/><text x="192" y="563.500">交点</text>
<use href="#ck" x="215" y="556"/><text x="225" y="563.500">垂点</text>
<use href="#ck" x="249" y="556"/><text x="259" y="563.500">切点</text>
<use href="#ck" x="282" y="556"/><text x="293" y="563.500">四分点</text>
<rect x="325" y="556" width="7.500" height="7.500" fill="#fff" stroke="#555" stroke-width=".8"/><text x="336" y="563.500">节点</text>
<use href="#ck" x="358" y="556"/><text x="369" y="563.500">顶点</text>
<rect x="393" y="556" width="7.500" height="7.500" fill="#eaecf1" stroke="#c4c6cc" stroke-width=".8"/><text x="403" y="563.500">投影</text>
<rect x="436" y="556" width="7.500" height="7.500" fill="#eaecf1" stroke="#c4c6cc" stroke-width=".8"/><text x="446" y="563.500">停用</text>
</g>

<!-- status -->
<rect y="568" width="1080" height="12" fill="#e7e9ee"/>
<rect y="567.500" width="1080" height="1" fill="#cfd2da"/>
<path d="M41,568V580M102,568V580M163,568V580M224,568V580M285,568V580M402,568V580M445,568V580M470,568V580M514,568V580M558,568V580M601,568V580M633,568V580M693,568V580M726,568V580" stroke="#d0d3da" stroke-width="1"/>
<rect x="471" y="568" width="43" height="12" fill="#f2f5fa"/><rect x="515" y="568" width="43" height="12" fill="#f2f5fa"/><rect x="559" y="568" width="42" height="12" fill="#f2f5fa"/><rect x="602" y="568" width="31" height="12" fill="#f2f5fa"/>
<g class="s">
<text x="3" y="578">工作平面</text><text x="52" y="578">x 707.729</text><text x="111" y="578">y 1295.341</text><text x="179" y="578">z 0.000</text><text x="246" y="578">毫米</text>
<rect x="288" y="570.500" width="8" height="8" fill="#000"/><text x="297" y="578">默认</text>
<text x="404" y="578">锁定格点</text><text x="449" y="578">正交</text><text x="474" y="578" class="b">平面模式</text><text x="516" y="578" class="b">物件锁点</text><text x="560" y="578" class="b">智慧轨迹</text><text x="602" y="578" class="b">操作轴</text><text x="636" y="578">记录建构历史</text><text x="696" y="578">过滤器</text><text x="728" y="578">内存使用量: 622 MB</text>
</g>

<!-- taskbar -->
<rect y="580" width="1080" height="28" fill="url(#tk)"/>
<rect x="173" y="580" width="32" height="28" fill="#e9f0f3"/>
<rect x="173" y="606.500" width="33" height="1.500" fill="#555"/><rect x="211" y="606.500" width="29" height="1.500" fill="#555"/>
<path d="M11,591.500L16.500,590.700V595.500H11ZM17.300,590.600L23,589.800V595.500H17.300ZM11,596.300H16.500V601L11,600.200ZM17.300,596.300H23V601.800L17.300,601Z" fill="#111"/>
<circle cx="52" cy="594" r="4.300" fill="none" stroke="#333" stroke-width="1.100"/><path d="M49,597.500L45.500,601.500" stroke="#333" stroke-width="1.100"/>
<path d="M80,592H87V600H80ZM78,590H89M78,602H89M90,590V597M90,599V602" fill="none" stroke="#333" stroke-width="1"/>
<circle cx="120" cy="595.500" r="8" fill="#1b89d4"/><path d="M113,592C116,586 127,586 128,595C128,598 123,599 122,596C121,593 115,591 113,592Z" fill="#4ed08a"/><path d="M120,593C116,594 115,600 120,602C116,604 112,598 113,594Z" fill="#0f5fb0"/>
<path d="M148,589H155L157,591H163V602H148Z" fill="#f0c040"/><rect x="148" y="592" width="15" height="3" fill="#fbe58a"/><rect x="150" y="597" width="11" height="5" fill="#2d86d9"/><rect x="153" y="599" width="5" height="3" fill="#f0c040"/>
<rect x="182" y="587" width="17" height="17" fill="#000"/><path d="M184,592L188,589L192,593L197,589L196,596L191,600L186,597Z" fill="#ddd"/><path d="M188,602L193,597L197,600" fill="none" stroke="#fff" stroke-width="1"/>
<rect x="217" y="587" width="17" height="17" rx="3" fill="#fbfcff"/>
<circle cx="222.500" cy="597" r="2.700" fill="none" stroke="#2aa0f5" stroke-width="1.500"/><circle cx="228.500" cy="597" r="2.700" fill="none" stroke="#e8524a" stroke-width="1.500"/><circle cx="225.500" cy="592.500" r="2.700" fill="none" stroke="#2aa0f5" stroke-width="1.500"/>
<path d="M912,598L916,594L920,598" fill="none" stroke="#444" stroke-width="1"/>
<rect x="929" y="592" width="8" height="5" fill="#222"/><rect x="927" y="593" width="2" height="3" fill="#222"/>
<path d="M945,600C946,595 949,592 953,591M948,600C949,597 950,595 953,594M951,600L953,598" fill="none" stroke="#888" stroke-width=".9"/>
<path d="M961,593H963L966,590V600L963,597H961ZM968,592C969.500,594 969.500,596 968,598M970,590.500C972.500,593.500 972.500,596.500 970,599.500" fill="none" stroke="#444" stroke-width=".9"/>
<text x="978" y="598.500" style="font-size:10.500px;fill:#222">中</text>
<text x="1006" y="592" style="font-size:8.500px;fill:#333">15:57</text>
<text x="996" y="604" style="font-size:8.500px;fill:#333">2021/5/19</text>
<path d="M1052,589H1062V597H1056L1053,600V597H1052Z" fill="#222"/>
<circle cx="1062" cy="600" r="4.500" fill="#dbe6ea" stroke="#777" stroke-width=".7"/>
<text x="1060.300" y="603" style="font-size:7.500px;fill:#111">1</text>
</svg>
</body></html>
